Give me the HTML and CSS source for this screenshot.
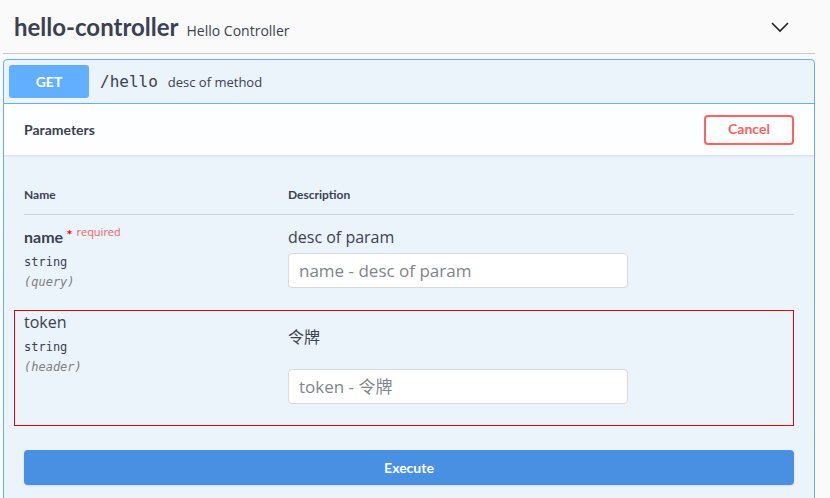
FILE: index.html
```html
<!DOCTYPE html>
<html>
<head>
<meta charset="utf-8">
<link rel="stylesheet" href="styles.css">
</head>
<body>
<div class="page">
  <div class="tag">
    <h3 class="tag-title">
      <span class="tag-name">hello-controller</span>
      <span class="tag-desc">Hello Controller</span>
    </h3>
    <svg class="chevron" width="20" height="20" viewBox="0 0 20 20"><path d="M2 6 L10 14 L18 6" fill="none" stroke="#222" stroke-width="1.6"/></svg>
  </div>
  <div class="opblock">
    <div class="summary">
      <span class="method">GET</span>
      <span class="path">/hello</span>
      <span class="summary-desc">desc of method</span>
    </div>
    <div class="section-header">
      <span class="section-title">Parameters</span>
      <button class="btn-cancel">Cancel</button>
    </div>
    <div class="params">
      <div class="params-head">
        <div class="col-name">Name</div>
        <div class="col-desc">Description</div>
      </div>
      <div class="param-row">
        <div class="col-name">
          <div class="p-name required-name">name<span class="star">&nbsp;*</span><span class="req">required</span></div>
          <div class="p-type">string</div>
          <div class="p-in">(query)</div>
        </div>
        <div class="col-desc">
          <div class="p-desc">desc of param</div>
          <input class="p-input" placeholder="name - desc of param">
        </div>
      </div>
      <div class="param-row highlighted">
        <div class="col-name">
          <div class="p-name plain">token</div>
          <div class="p-type">string</div>
          <div class="p-in">(header)</div>
        </div>
        <div class="col-desc">
          <div class="p-desc cjk">令牌</div>
          <input class="p-input" placeholder="token - 令牌">
        </div>
      </div>
      <button class="btn-execute">Execute</button>
    </div>
  </div>
</div>
</body>
</html>
```
FILE: styles.css
```css
* { box-sizing: border-box; }
html, body { margin: 0; padding: 0; background: #fafafa; }
body { font-family: "Open Sans", "Noto Sans CJK SC", sans-serif; color: #3b4151; }
.page { padding: 0 15px 0 3px; }

.tag {
  display: flex;
  align-items: center;
  justify-content: space-between;
  height: 54px;
  padding: 0 25px 0 11px;
  border-bottom: 1px solid #c8c9cc;
}
.tag-title { margin: 0; display: flex; align-items: baseline; font-weight: 400; }
.tag-name { font-family: "Lato", sans-serif; font-weight: 700; font-size: 24px; color: #3b4151; }
.tag-desc { font-size: 14px; font-weight: 400; margin-left: 8px; color: #3b4151; }
.chevron { display: block; margin-top: 0; }

.opblock {
  margin-top: 5px;
  border: 1px solid #61affe;
  border-radius: 4px;
  background: #ebf3fb;
  height: 460px;
}
.summary {
  display: flex;
  align-items: center;
  height: 44px;
  padding: 0 5px;
  border-bottom: 1px solid #61affe;
}
.method {
  width: 80px;
  height: 33px;
  background: #61affe;
  border-radius: 3px;
  color: #fff;
  font-family: "Lato", sans-serif;
  font-weight: 700;
  font-size: 14px;
  display: flex;
  align-items: center;
  justify-content: center;
}
.path { font-family: "DejaVu Sans Mono", monospace; font-size: 16px; margin-left: 11px; color: #3b4151; }
.summary-desc { font-size: 13px; margin-left: 10px; }

.section-header {
  display: flex;
  align-items: center;
  justify-content: space-between;
  height: 51px;
  padding: 0 20px;
  background: #fdfeff;
  box-shadow: 0 1px 2px rgba(0,0,0,.1);
}
.section-title { font-family: "Lato", sans-serif; font-weight: 700; font-size: 14px; }
.btn-cancel {
  width: 90px;
  height: 30px;
  border: 2px solid #ff6060;
  border-radius: 4px;
  background: transparent;
  color: #ff6060;
  font-family: "Lato", sans-serif;
  font-weight: 700;
  font-size: 14px;
  padding: 0 0 2px 0;
}

.params { padding: 28px 20px 0 20px; }
.params-head {
  display: flex;
  font-family: "Lato", sans-serif;
  font-weight: 700;
  font-size: 12px;
  height: 32px;
  padding-top: 4px;
  border-bottom: 1px solid #cdd3db;
}
.col-name { width: 264px; flex: none; }
.col-desc { flex: 1; }

.param-row { display: flex; padding: 11px 0 0 0; height: 95px; }
.param-row.highlighted {
  margin: 0 0 0 -10px;
  padding: 0 0 0 9px;
  height: 116px;
  border: 1px solid #e0060c;
}
.param-row.highlighted .col-desc { padding-top: 14px; }
.p-name { font-size: 16px; line-height: 22px; }
.required-name { font-family: "Lato", sans-serif; font-weight: 700; }
.star { color: #ff0000; font-size: 14px; vertical-align: top; position: relative; top: -2px; }
.req { color: #ff6060; font-family: "Open Sans", sans-serif; font-weight: 400; font-size: 11px; vertical-align: top; position: relative; top: -5px; margin-left: 4px; }
.p-type { font-family: "DejaVu Sans Mono", monospace; font-size: 12px; font-weight: 400; margin-top: 4px; line-height: 20px; }
.p-in { font-family: "DejaVu Sans Mono", monospace; font-size: 12px; font-style: italic; color: #808080; line-height: 20px; }
.p-desc { font-size: 16px; line-height: 22px; margin-bottom: 5px; }
.p-desc.cjk { font-family: "Noto Sans CJK SC", sans-serif; font-size: 16px; margin-bottom: 22px; }
.p-input {
  display: block;
  width: 340px;
  height: 35px;
  border: 1px solid #d9d9d9;
  border-radius: 4px;
  background: #fff;
  padding: 0 10px;
  font-family: "Open Sans", "Noto Sans CJK SC", sans-serif;
  font-size: 17px;
  outline: none;
}
.p-input::placeholder { color: #80848c; }

.btn-execute {
  display: block;
  width: 100%;
  height: 35px;
  margin-top: 24px;
  border: none;
  border-radius: 4px;
  background: #4990e2;
  color: #fff;
  font-family: "Lato", sans-serif;
  font-weight: 700;
  font-size: 14px;
  box-shadow: 0 1px 2px rgba(0,0,0,.1);
}
```
